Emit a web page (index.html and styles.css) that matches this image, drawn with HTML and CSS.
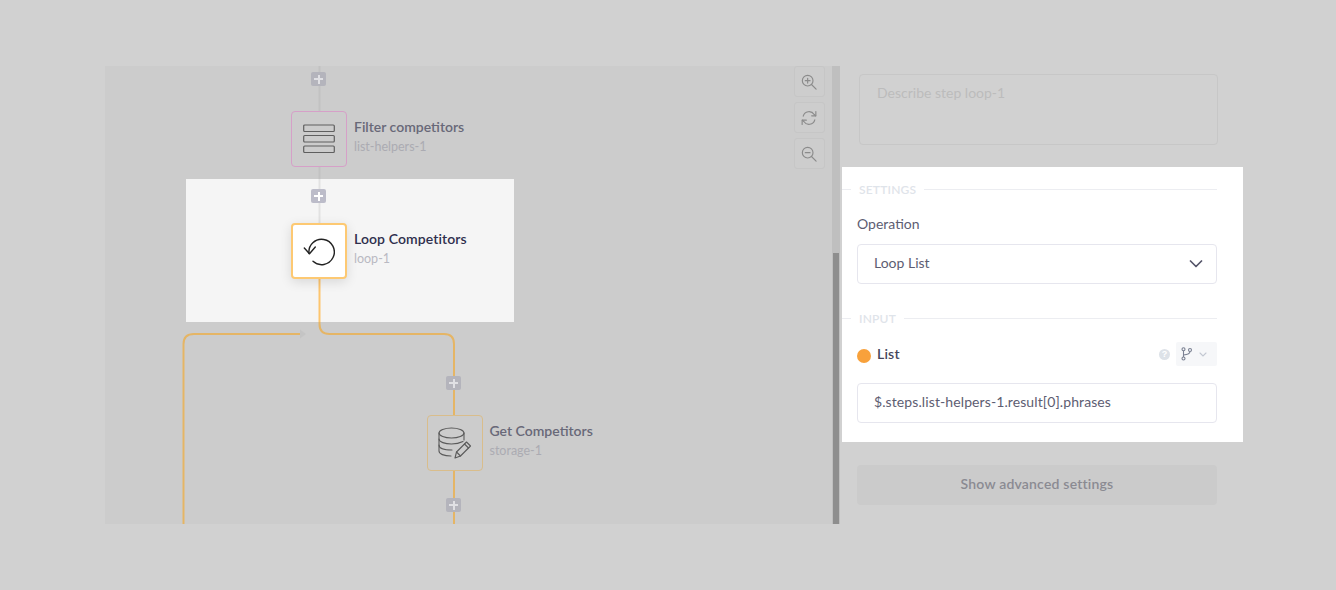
FILE: index.html
```html
<!DOCTYPE html>
<html lang="en">
<head>
  <meta charset="UTF-8" />
  <title>Flow editor</title>
  <link rel="stylesheet" href="styles.css">
</head>
<body>
  <div class="editor">
    <div class="canvas">
      <svg class="wires" width="727" height="458" viewBox="0 0 727 458" fill="none">
        <path class="wire-grey" d="M214.500 0V113"/>
        <path class="wire-orange" d="M214.500 256V258Q214.500 268 224.500 268H339Q349 268 349 278V458"/>
        <path class="wire-orange" d="M195 268H89Q78.500 268 78.500 278V458"/>
        <path class="wire-arrow" d="M195 263.500L201 268L195 272.500Z"/>
      </svg>

      <div class="spotlight-node"></div>
      <svg class="wires" width="727" height="458" viewBox="0 0 727 458" fill="none">
        <path class="wire-light" d="M214.500 113V158"/>
        <path class="wire-bright" d="M214.500 212V256"/>
      </svg>

      <div class="add-btn add-a"></div>
      <div class="add-btn add-b add-lit"></div>
      <div class="add-btn add-c"></div>
      <div class="add-btn add-d"></div>

      <div class="node node-filter">
        <div class="node-box box-pink">
          <svg width="32" height="30" viewBox="0 0 32 30" fill="none" stroke="#5f5f5f" stroke-width="1.200">
            <rect x="0.700" y="1" width="30.600" height="6.500" rx="1"/>
            <rect x="0.700" y="11.500" width="30.600" height="6.500" rx="1"/>
            <rect x="0.700" y="22" width="30.600" height="6.500" rx="1"/>
          </svg>
        </div>
        <div class="node-text">
          <div class="node-title">Filter competitors</div>
          <div class="node-id">list-helpers-1</div>
        </div>
      </div>

      <div class="node node-loop">
        <div class="node-box box-active">
          <svg width="32" height="30" viewBox="0 0 32 30" fill="none" stroke="#222" stroke-width="1.400" stroke-linecap="round" stroke-linejoin="round">
            <path d="M6 17.500A12.700 12.700 0 1 1 10 25.300"/>
            <path d="M1.300 12L6.500 17.700L12.300 11"/>
          </svg>
        </div>
        <div class="node-text">
          <div class="node-title title-lit">Loop Competitors</div>
          <div class="node-id">loop-1</div>
        </div>
      </div>

      <div class="node node-storage">
        <div class="node-box box-tan">
          <svg width="34" height="32" viewBox="0 0 34 32" fill="none" stroke="#5a5a5a" stroke-width="1.100" stroke-linecap="round" stroke-linejoin="round">
            <ellipse cx="13.500" cy="6" rx="12.500" ry="5"/>
            <path d="M1 6V24C1 27 6 29 13 29"/>
            <path d="M26 6V13"/>
            <path d="M1 12C1 15 7 17 13.500 17C18 17 22 16 25 14.500"/>
            <path d="M1 18C1 21 6 23 14 23"/>
            <path d="M17 31L18.500 25L28.500 15L32.500 19L22.500 29Z"/>
            <path d="M26.500 17L30.500 21"/>
            <path d="M18.500 25L22.500 29"/>
          </svg>
        </div>
        <div class="node-text">
          <div class="node-title">Get Competitors</div>
          <div class="node-id">storage-1</div>
        </div>
      </div>

      <div class="zoom-tools">
        <button class="tool">
          <svg width="16" height="16" viewBox="0 0 18 18" fill="none" stroke="#8b8b8b" stroke-width="1.300" stroke-linecap="round">
            <circle cx="7.500" cy="7.500" r="6"/><path d="M11.800 11.800L17 17M7.500 4.800V10.200M4.800 7.500H10.200"/>
          </svg>
        </button>
        <button class="tool">
          <svg width="16" height="16" viewBox="0 0 18 18" fill="none" stroke="#8b8b8b" stroke-width="1.300" stroke-linecap="round" stroke-linejoin="round">
            <path d="M2.500 7A6.800 6.800 0 0 1 14.800 5L16.500 6.500"/><path d="M16.700 1.800V6.600H12"/>
            <path d="M15.500 11A6.800 6.800 0 0 1 3.200 13L1.500 11.500"/><path d="M1.300 16.200V11.400H6"/>
          </svg>
        </button>
        <button class="tool">
          <svg width="16" height="16" viewBox="0 0 18 18" fill="none" stroke="#8b8b8b" stroke-width="1.300" stroke-linecap="round">
            <circle cx="7.500" cy="7.500" r="6"/><path d="M11.800 11.800L17 17M4.800 7.500H10.200"/>
          </svg>
        </button>
      </div>
    </div>

    <div class="scrollbar"><div class="scroll-thumb"></div></div>

    <aside class="panel">
      <div class="describe">Describe step loop-1</div>

      <section class="settings">
        <div class="legend"><span>SETTINGS</span></div>
        <div class="field-label">Operation</div>
        <div class="field select">
          <span>Loop List</span>
          <svg class="chevron" width="14" height="8" viewBox="0 0 14 8" fill="none" stroke="#55556a" stroke-width="1.700" stroke-linecap="round" stroke-linejoin="round"><path d="M1.500 1L7 6.500L12.500 1"/></svg>
        </div>
        <div class="legend legend-input"><span>INPUT</span></div>
        <div class="input-head">
          <span class="dot"></span>
          <span class="input-name">List</span>
          <span class="help">?</span>
          <span class="branch">
            <svg width="12" height="14" viewBox="0 0 12 14" fill="none" stroke="#7a8092" stroke-width="1.100"><circle cx="2.500" cy="2.300" r="1.500"/><circle cx="9" cy="3" r="1.500"/><circle cx="2.500" cy="11.500" r="1.500"/><path d="M2.500 3.800V10M9 4.500Q9 7.500 2.500 8"/></svg>
            <svg width="8" height="5" viewBox="0 0 8 5" fill="none" stroke="#c3c8d2" stroke-width="1.100" stroke-linecap="round"><path d="M1 1L4 4L7 1"/></svg>
          </span>
        </div>
        <div class="field path">$.steps.list-helpers-1.result[0].phrases</div>
      </section>

      <div class="advanced">Show advanced settings</div>
    </aside>
  </div>
</body>
</html>
```

FILE: styles.css
```css
* {
  margin: 0;
  padding: 0;
  box-sizing: border-box;
}
html, body {
  width: 100%;
  height: 100%;
  overflow: hidden;
  background: #d1d1d1;
  font-family: 'Lato', 'Open Sans', sans-serif;
}
.editor {
  display: flex;
  height: 458px;
  margin: 66px 0 0 105px;
}

/* canvas */
.canvas {
  position: relative;
  width: 727px;
  height: 458px;
  background: #cccccc;
  overflow: hidden;
}
.wires {
  position: absolute;
  top: 0;
  left: 0;
}
.wire-grey {
  stroke: #c2c2c2;
  stroke-width: 2;
}
.wire-orange {
  stroke: #e5b565;
  stroke-width: 2;
}
.wire-arrow {
  fill: #c4c4c4;
}
.wire-light {
  stroke: #e2e2e2;
  stroke-width: 2;
}
.wire-bright {
  stroke: #fdc56e;
  stroke-width: 2;
}
.spotlight-node {
  position: absolute;
  left: 81px;
  top: 113px;
  width: 327.500px;
  height: 143px;
  background: #f5f5f5;
}
.add-btn {
  position: absolute;
  width: 15px;
  height: 14px;
  border-radius: 2px;
  background: #b4b4bc;
}
.add-btn::before,
.add-btn::after {
  content: "";
  position: absolute;
  background: #e0e0e4;
}
.add-btn::before {
  left: 3px;
  top: 6px;
  width: 9px;
  height: 2px;
}
.add-btn::after {
  left: 6.500px;
  top: 2.500px;
  width: 2px;
  height: 9px;
}
.add-a { left: 206px; top: 6px; }
.add-b { left: 206px; top: 123px; }
.add-c { left: 341px; top: 310px; }
.add-d { left: 341px; top: 432px; }
.add-lit {
  background: #bcbcc9;
}
.add-lit::before,
.add-lit::after {
  background: #fff;
}
.node {
  position: absolute;
  display: flex;
  gap: 7px;
}
.node-filter { left: 186px; top: 45px; }
.node-loop { left: 186px; top: 157px; }
.node-storage { left: 321.500px; top: 349px; }
.node-box {
  display: flex;
  align-items: center;
  justify-content: center;
  width: 56px;
  height: 56px;
  border-radius: 4px;
  border: 1px solid #d6a0c8;
  background: #cccccc;
}
.box-active {
  background: #fff;
  border: 2px solid #fdc973;
  box-shadow: 0 3px 12px rgba(0, 0, 0, 0.12);
}
.box-tan {
  border-color: #d9bd8b;
}
.node-text {
  padding-top: 6px;
}
.node-title {
  font-size: 14px;
  line-height: 20px;
  font-weight: 600;
  color: #686878;
  white-space: nowrap;
}
.title-lit {
  letter-spacing: 0.1px;
  color: #2f2f4d;
}
.node-id {
  margin-top: 2px;
  font-size: 12.500px;
  line-height: 16px;
  color: #ababb2;
  white-space: nowrap;
}
.node-loop .node-id {
  color: #b9b9c2;
}
.zoom-tools {
  position: absolute;
  top: 0;
  right: 7px;
  display: flex;
  flex-direction: column;
  gap: 5px;
}
.tool {
  display: flex;
  align-items: center;
  justify-content: center;
  width: 31px;
  height: 31px;
  padding-right: 2px;
  border: 1px solid #c6c6c6;
  border-radius: 3px;
  background: #cdcdcd;
}

.scrollbar {
  position: relative;
  width: 8px;
  height: 458px;
  background: #bfbfbf;
}
.scroll-thumb {
  position: absolute;
  top: 187px;
  bottom: 0;
  left: 1px;
  right: 1px;
  background: #8e8e8e;
}

/* right panel */
.panel {
  width: 401px;
  margin-left: 2px;
}
.describe {
  width: 359px;
  height: 71px;
  margin: 8px 0 22px 17px;
  padding: 9px 17px;
  border: 1px solid #c7c7c7;
  border-radius: 4px;
  font-size: 14px;
  line-height: 18px;
  color: #bcbcbc;
}
.settings {
  width: 401px;
  height: 275px;
  padding: 14px 26px 0 15px;
  background: #fff;
}
.legend {
  display: flex;
  align-items: center;
  gap: 8px;
  height: 16px;
  margin-left: -15px;
  font-size: 12px;
  letter-spacing: 0.2px;
  font-weight: 600;
  color: #dfe4ea;
}
.legend::before {
  content: "";
  width: 9px;
  border-top: 1px solid #ecedf1;
}
.legend::after {
  content: "";
  flex: 1;
  border-top: 1px solid #ecedf1;
}
.field-label {
  margin-top: 17px;
  font-size: 14px;
  line-height: 20px;
  color: #5d5d72;
}
.field {
  display: flex;
  align-items: center;
  justify-content: space-between;
  height: 40px;
  margin-top: 10px;
  padding: 0 13px 4px 16px;
  border: 1px solid #e6e6ee;
  border-radius: 4px;
  font-size: 14px;
  color: #5d5d72;
}
.chevron {
  margin-top: 4px;
}
.legend-input {
  margin-top: 26px;
}
.input-head {
  display: flex;
  align-items: center;
  height: 24px;
  margin-top: 16px;
}
.dot {
  width: 14px;
  height: 14px;
  margin-top: 3px;
  border-radius: 50%;
  background: #f8a13b;
}
.input-name {
  flex: 1;
  margin: 0 0 2px 6px;
  font-size: 14px;
  font-weight: 600;
  letter-spacing: 0.2px;
  color: #45455c;
}
.help {
  width: 11px;
  height: 11px;
  border-radius: 50%;
  background: #dde2e8;
  color: #fff;
  font: bold 9px/11px 'Liberation Sans', sans-serif;
  text-align: center;
}
.branch {
  display: flex;
  align-items: center;
  gap: 6px;
  width: 41px;
  height: 24px;
  margin-left: 6px;
  padding-left: 5px;
  border-radius: 2px;
  background: #f6f7f9;
}
.input-head + .field {
  margin-top: 17px;
}
.path {
  letter-spacing: 0.1px;
}
.advanced {
  width: 360px;
  height: 40px;
  margin: 23px 0 0 15px;
  border-radius: 4px;
  background: #cbcbcb;
  font-size: 14px;
  font-weight: 600;
  letter-spacing: 0.2px;
  line-height: 38px;
  text-align: center;
  color: #8a8a92;
}
```
